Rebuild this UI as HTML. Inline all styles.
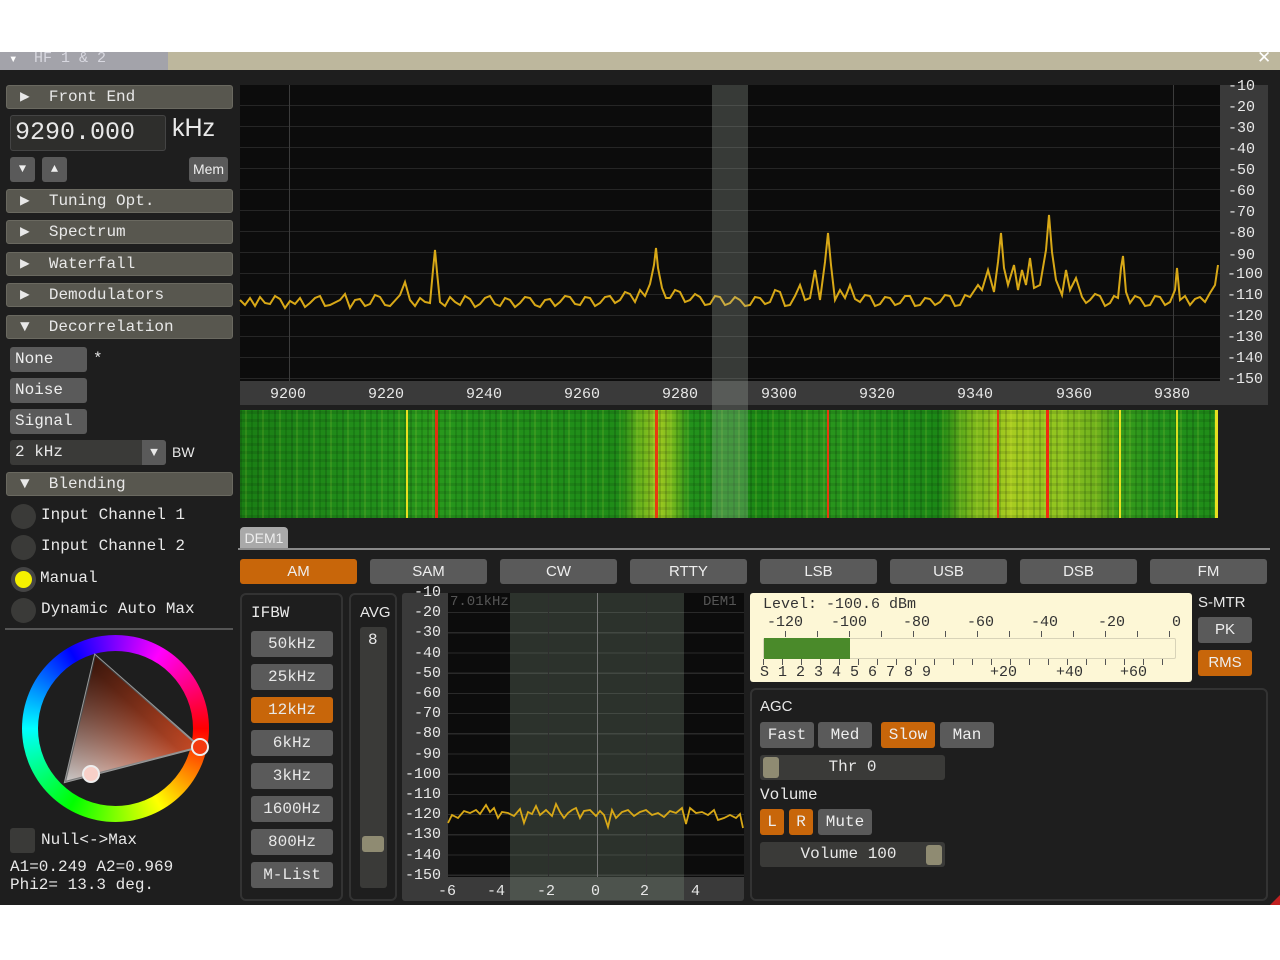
<!DOCTYPE html>
<html><head><meta charset="utf-8">
<style>
*{box-sizing:border-box;margin:0;padding:0}
body{width:1280px;height:960px;background:#fff;position:relative;overflow:hidden;font-family:"Liberation Mono",monospace;color:#e8e8e8;font-size:16px}
.a{position:absolute}
.main{left:0;top:70px;width:1280px;height:835px;background:#1e1e1e}
.hdr{position:absolute;left:6px;width:227px;height:24px;background:#58574f;border:1px solid #6a6960;border-radius:3px;line-height:22px;padding-left:13px;white-space:pre}
.btn{position:absolute;background:#5a5a5a;border-radius:3px;text-align:center;color:#eee;line-height:25px;height:25px}
.or{background:#c8660a !important}
.mode{position:absolute;top:559px;width:117px;height:25px;background:#5a5a5a;border-radius:3px;text-align:center;line-height:25px;font-family:"Liberation Sans",sans-serif;font-size:15px;color:#eee}
.rad{position:absolute;left:11px;width:25px;height:25px;border-radius:50%;background:#3a3a38}
.rl{position:absolute;left:41px;white-space:pre}
.panel{position:absolute;border:2px solid #333;border-radius:6px}
.ib{position:absolute;left:251px;width:82px;height:26px;background:#5a5a5a;border-radius:3px;text-align:center;line-height:26px}
</style></head><body>
<div class="a" style="left:0;top:52px;width:1280px;height:18px;background:#bdb79d"></div>
<div class="a" style="left:0;top:52px;width:168px;height:18px;background:#a3a3aa"></div>
<div class="a" style="left:9px;top:51px;font-size:14px;color:#fff">▾</div>
<div class="a" style="left:34px;top:50px;font-size:15px;color:#d8d8e0;white-space:pre">HF 1 &amp; 2</div>
<div class="a" style="left:1257px;top:48px;font-size:17px;color:#fff;font-family:'Liberation Sans',sans-serif">✕</div>
<div class="a main"></div>

<div class="hdr" style="top:85px">▶  Front End</div>
<div class="a" style="left:10px;top:115px;width:156px;height:36px;background:#2e2e2c;border:1px solid #444;border-radius:3px;font-size:25px;line-height:33px;padding-left:4px">9290.000</div>
<div class="a" style="left:172px;top:114px;font-size:25px;font-family:'Liberation Sans',sans-serif">kHz</div>
<div class="btn" style="left:10px;top:157px;width:25px;font-size:12px">▼</div>
<div class="btn" style="left:42px;top:157px;width:25px;font-size:12px">▲</div>
<div class="btn" style="left:189px;top:157px;width:39px;font-size:14px;font-family:'Liberation Sans',sans-serif">Mem</div>
<div class="hdr" style="top:189px">▶  Tuning Opt.</div>
<div class="hdr" style="top:220px">▶  Spectrum</div>
<div class="hdr" style="top:252px">▶  Waterfall</div>
<div class="hdr" style="top:283px">▶  Demodulators</div>
<div class="hdr" style="top:315px">▼  Decorrelation</div>
<div class="btn" style="left:10px;top:347px;width:77px;text-align:left;padding-left:5px">None</div>
<div class="a" style="left:93px;top:350px">*</div>
<div class="btn" style="left:10px;top:378px;width:77px;text-align:left;padding-left:5px">Noise</div>
<div class="btn" style="left:10px;top:409px;width:77px;text-align:left;padding-left:5px">Signal</div>
<div class="a" style="left:10px;top:440px;width:156px;height:25px;background:#3a3a38;border-radius:3px;line-height:25px;padding-left:5px;white-space:pre">2 kHz</div>
<div class="a" style="left:142px;top:440px;width:24px;height:25px;background:#5a5a5a;border-radius:0 3px 3px 0;text-align:center;line-height:25px;font-size:13px">▼</div>
<div class="a" style="left:172px;top:444px;font-size:14px;font-family:'Liberation Sans',sans-serif">BW</div>
<div class="hdr" style="top:472px">▼  Blending</div>
<div class="rad" style="top:504px"></div><div class="rl" style="top:506px">Input Channel 1</div>
<div class="rad" style="top:535px"></div><div class="rl" style="top:537px">Input Channel 2</div>
<div class="rad" style="top:567px;background:#444"><div style="position:absolute;left:4px;top:4px;width:17px;height:17px;border-radius:50%;background:#f5f000"></div></div><div class="rl" style="top:569px;left:40px">Manual</div>
<div class="rad" style="top:598px"></div><div class="rl" style="top:600px">Dynamic Auto Max</div>
<div class="a" style="left:5px;top:628px;width:228px;height:2px;background:#555"></div>
<div class="a" style="left:22px;top:635px;width:187px;height:187px;border-radius:50%;background:conic-gradient(from 90deg,#f00,#ff0 60deg,#0f0 120deg,#0ff 180deg,#00f 240deg,#f0f 300deg,#f00 360deg)"></div>
<div class="a" style="left:38px;top:651px;width:155px;height:155px;border-radius:50%;background:#1e1e1e"></div>
<svg class="a" style="left:0;top:620px" width="240" height="200">
<defs><linearGradient id="tg" x1="0" y1="1" x2="1" y2="0"><stop offset="0" stop-color="#fff"/><stop offset="0.55" stop-color="#c04a28"/><stop offset="1" stop-color="#ff4a10"/></linearGradient>
<linearGradient id="tk" x1="0" y1="0" x2="0.6" y2="1"><stop offset="0" stop-color="#000" stop-opacity="1"/><stop offset="1" stop-color="#000" stop-opacity="0"/></linearGradient></defs>
<polygon points="95,35 200,127 65,162" fill="url(#tg)" stroke="#999" stroke-width="2"/>
<polygon points="95,35 200,127 65,162" fill="url(#tk)" opacity="0.8"/>
<circle cx="200" cy="127" r="8" fill="#f43a10" stroke="#eee" stroke-width="2"/>
<circle cx="91" cy="154" r="8" fill="#f8d0c8" stroke="#eee" stroke-width="2"/>
</svg>
<div class="a" style="left:10px;top:828px;width:25px;height:25px;background:#3a3a38;border-radius:3px"></div>
<div class="a" style="left:41px;top:831px">Null&lt;-&gt;Max</div>
<div class="a" style="left:10px;top:858px;line-height:18px;white-space:pre">A1=0.249 A2=0.969
Phi2= 13.3 deg.</div>

<div class="a" style="left:240px;top:85px;width:980px;height:296px;background:#0c0c0c;background-image:repeating-linear-gradient(180deg,transparent 0 20px,#262626 20px 21px)"></div>
<div class="a" style="left:289px;top:85px;width:1px;height:296px;background:#3c3c3c"></div>
<div class="a" style="left:1173px;top:85px;width:1px;height:296px;background:#3c3c3c"></div>
<div class="a" style="left:240px;top:381px;width:1028px;height:24px;background:#3a3a3a"></div>
<div class="a" style="left:1220px;top:85px;width:48px;height:320px;background:#3a3a3a"></div>
<div class="a" style="left:1228px;top:76px;font-size:15px;line-height:21.07px;white-space:pre">-10
-20
-30
-40
-50
-60
-70
-80
-90</div>
<div class="a" style="left:1227px;top:264px;font-size:15px;line-height:21.07px;white-space:pre">-100
-110
-120
-130
-140
-150</div>
<div class="a" style="top:386px;left:0;font-size:15px">
<span class="a" style="left:270px">9200</span><span class="a" style="left:368px">9220</span><span class="a" style="left:466px">9240</span><span class="a" style="left:564px">9260</span><span class="a" style="left:662px">9280</span><span class="a" style="left:761px">9300</span><span class="a" style="left:859px">9320</span><span class="a" style="left:957px">9340</span><span class="a" style="left:1056px">9360</span><span class="a" style="left:1154px">9380</span></div>
<svg class="a" style="left:0;top:0" width="1280" height="400">
<polyline fill="none" stroke="#d8a817" stroke-width="2" points="240,300 245,305 250,298 255,306 260,297 265,303 270,304 275,296 280,299 285,308 290,301 295,304 300,298 305,307 310,303 315,298 320,296 325,306 330,305 340,300 345,294 350,308 355,300 360,299 365,306 370,304 375,295 380,297 385,305 390,306 400,295 405,282 410,300 415,306 420,298 425,302 430,303 433,270 435,250 437,272 440,302 445,306 450,297 455,302 460,305 465,296 470,299 475,307 480,304 485,298 490,296 495,304 500,306 505,298 510,300 515,307 520,303 525,297 530,298 535,305 540,307 545,300 550,299 555,306 560,302 565,296 570,297 575,304 580,305 585,297 590,298 595,306 600,303 605,297 610,296 615,303 620,300 625,292 630,294 635,302 640,290 645,296 650,284 654,265 656,248 658,268 662,288 666,298 670,298 675,290 680,292 685,302 690,300 695,294 700,297 705,305 710,304 715,296 720,297 725,305 730,303 735,297 740,300 745,306 750,305 755,297 760,298 765,304 770,302 775,290 780,292 785,306 790,305 795,296 800,285 805,300 810,298 815,270 820,300 825,262 828,233 831,265 835,300 840,290 845,298 850,285 855,299 860,302 865,295 870,296 875,306 880,304 885,297 890,298 895,305 900,303 905,296 910,296 915,306 920,305 925,298 930,299 935,305 940,302 945,295 950,296 955,306 960,305 965,295 970,297 978,285 982,290 988,270 994,292 998,262 1001,233 1004,268 1008,285 1014,265 1018,290 1022,270 1026,285 1030,258 1034,288 1040,285 1046,250 1049,215 1052,252 1056,280 1062,295 1066,270 1070,290 1076,278 1082,297 1086,303 1090,300 1095,294 1100,296 1105,306 1110,303 1114,296 1118,298 1121,268 1123,256 1126,292 1130,303 1135,296 1140,298 1145,306 1150,305 1155,296 1160,297 1165,305 1170,302 1175,290 1177,268 1180,300 1185,296 1190,305 1195,299 1200,297 1205,302 1210,293 1215,285 1218,265"/>
</svg>
<div class="a" style="left:240px;top:410px;width:978px;height:108px;
background:
linear-gradient(90deg,transparent 166px,#e8e020 166px 168px,transparent 168px 195px,#e03010 195px 198px,transparent 198px 415px,#e83a10 415px 418px,transparent 418px 587px,#e83a10 587px 589px,transparent 589px 757px,#e83a10 757px 759px,transparent 759px 806px,#f02a10 806px 809px,transparent 809px 879px,#e8e020 879px 881px,transparent 881px 936px,#d8e020 936px 938px,transparent 938px 975px,#e8e020 975px 978px),
repeating-linear-gradient(90deg,rgba(0,0,0,.14) 0 2px,transparent 2px 5px,rgba(255,255,80,.1) 5px 7px,transparent 7px 11px,rgba(0,60,0,.18) 11px 13px,transparent 13px 17px),
repeating-linear-gradient(0deg,rgba(0,0,0,.1) 0 3px,transparent 3px 8px),
linear-gradient(90deg,#1a7e14 0,#23921c 150px,#2a9a1c 190px,#23921c 230px,#1f8c18 380px,#6ab41c 400px,#9cc820 420px,#6ab41c 435px,#23921c 450px,#1c8a16 520px,#2a961c 580px,#23921c 620px,#1c8816 700px,#78b81c 730px,#a8cc20 770px,#90c420 820px,#6cb01c 860px,#3a9e1c 880px,#23921c 920px,#1f8c18 978px);"></div>
<div class="a" style="left:712px;top:85px;width:36px;height:433px;background:rgba(170,180,170,.28)"></div>

<div class="a" style="left:240px;top:527px;width:48px;height:22px;background:#a9a9a9;border-radius:4px 4px 0 0;color:#eee;font-family:'Liberation Sans',sans-serif;font-size:14px;line-height:22px;text-align:center">DEM1</div>
<div class="a" style="left:238px;top:548px;width:1032px;height:2px;background:#8a8a8a"></div>
<div class="mode or" style="left:240px">AM</div>
<div class="mode" style="left:370px">SAM</div>
<div class="mode" style="left:500px">CW</div>
<div class="mode" style="left:630px">RTTY</div>
<div class="mode" style="left:760px">LSB</div>
<div class="mode" style="left:890px">USB</div>
<div class="mode" style="left:1020px">DSB</div>
<div class="mode" style="left:1150px">FM</div>

<div class="panel" style="left:240px;top:593px;width:103px;height:308px"></div>
<div class="a" style="left:251px;top:604px">IFBW</div>
<div class="ib" style="top:631px">50kHz</div>
<div class="ib" style="top:664px">25kHz</div>
<div class="ib or" style="top:697px">12kHz</div>
<div class="ib" style="top:730px">6kHz</div>
<div class="ib" style="top:763px">3kHz</div>
<div class="ib" style="top:796px">1600Hz</div>
<div class="ib" style="top:829px">800Hz</div>
<div class="ib" style="top:862px">M-List</div>
<div class="panel" style="left:349px;top:593px;width:48px;height:308px"></div>
<div class="a" style="left:360px;top:604px;font-family:'Liberation Sans',sans-serif;font-size:15px">AVG</div>
<div class="a" style="left:360px;top:627px;width:27px;height:261px;background:#3a3a38;border-radius:3px"></div>
<div class="a" style="left:368px;top:631px">8</div>
<div class="a" style="left:362px;top:836px;width:22px;height:16px;background:#8f8b72;border-radius:3px"></div>

<div class="a" style="left:402px;top:593px;width:342px;height:308px;background:#3a3a3a;border-radius:3px"></div>
<div class="a" style="left:448px;top:593px;width:296px;height:284px;background:#0c0c0c;background-image:repeating-linear-gradient(180deg,transparent 0 19px,#2a2a2a 19px 20.2px)"></div>
<div class="a" style="left:510px;top:593px;width:174px;height:307px;background:rgba(130,150,130,.28)"></div>
<div class="a" style="left:597px;top:593px;width:1px;height:284px;background:#777"></div>
<div class="a" style="left:548px;top:593px;width:1px;height:284px;background:#2e2e2e"></div>
<div class="a" style="left:646px;top:593px;width:1px;height:284px;background:#2e2e2e"></div>
<div class="a" style="left:450px;top:594px;font-size:14px;color:#555">7.01kHz</div>
<div class="a" style="left:703px;top:594px;font-size:14px;color:#555">DEM1</div>
<div class="a" style="left:405px;top:583px;font-size:15px;line-height:20.2px;white-space:pre;text-align:right;width:36px">-10
-20
-30
-40
-50
-60
-70
-80
-90
-100
-110
-120
-130
-140
-150</div>
<div class="a" style="top:883px;left:0;font-size:15px"><span class="a" style="left:438px">-6</span><span class="a" style="left:487px">-4</span><span class="a" style="left:537px">-2</span><span class="a" style="left:591px">0</span><span class="a" style="left:640px">2</span><span class="a" style="left:691px">4</span></div>
<svg class="a" style="left:0;top:0" width="760" height="900">
<polyline fill="none" stroke="#d8a817" stroke-width="1.8" points="448,823 452,815 458,818 464,811 470,813 476,810 480,814 486,805 490,812 494,808 498,818 502,812 508,813 514,816 520,809 524,823 528,812 532,814 536,806 540,815 546,810 552,816 556,804 560,812 564,818 568,813 572,810 576,808 580,818 584,811 590,810 596,816 600,811 604,815 608,827 612,810 616,818 622,812 628,810 634,816 640,812 646,810 652,815 658,813 664,817 670,811 676,813 682,808 686,824 690,808 696,813 702,812 708,815 714,810 718,820 724,818 730,815 736,818 740,814 743,828"/>
</svg>

<div class="a" style="left:750px;top:593px;width:442px;height:89px;background:#fdf7d6;border-radius:3px"></div>
<div class="a" style="left:763px;top:596px;font-size:15px;color:#333;white-space:pre">Level: -100.6 dBm</div>
<div class="a" style="top:614px;left:0;font-size:15px;color:#333"><span class="a" style="left:767px">-120</span><span class="a" style="left:831px">-100</span><span class="a" style="left:903px">-80</span><span class="a" style="left:967px">-60</span><span class="a" style="left:1031px">-40</span><span class="a" style="left:1098px">-20</span><span class="a" style="left:1172px">0</span></div>
<div class="a" style="left:763px;top:638px;width:413px;height:21px;border:1px solid #d8d3b8;border-radius:2px"></div>
<div class="a" style="left:764px;top:638px;width:86px;height:21px;background:#4a8a2a"></div>
<div class="a" style="left:763px;top:631px;width:413px;height:6px;background:repeating-linear-gradient(90deg,#555 0 1px,transparent 1px 32px);background-position:22px 0"></div>
<div class="a" style="left:763px;top:659px;width:413px;height:6px;background:repeating-linear-gradient(90deg,#555 0 1px,transparent 1px 19px)"></div>
<div class="a" style="top:664px;left:0;font-size:15px;color:#333;white-space:pre"><span class="a" style="left:760px">S 1 2 3 4 5 6 7 8 9</span><span class="a" style="left:990px">+20</span><span class="a" style="left:1056px">+40</span><span class="a" style="left:1120px">+60</span></div>
<div class="a" style="left:1198px;top:594px;font-family:'Liberation Sans',sans-serif;font-size:15px">S-MTR</div>
<div class="btn" style="left:1198px;top:617px;width:54px;height:26px;line-height:26px;font-family:'Liberation Sans',sans-serif;font-size:15px">PK</div>
<div class="btn or" style="left:1198px;top:650px;width:54px;height:26px;line-height:26px;font-family:'Liberation Sans',sans-serif;font-size:15px">RMS</div>

<div class="panel" style="left:750px;top:688px;width:518px;height:213px"></div>
<div class="a" style="left:760px;top:698px;font-family:'Liberation Sans',sans-serif;font-size:15px">AGC</div>
<div class="btn" style="left:760px;top:722px;width:54px;height:26px;line-height:26px">Fast</div>
<div class="btn" style="left:818px;top:722px;width:54px;height:26px;line-height:26px">Med</div>
<div class="btn or" style="left:881px;top:722px;width:54px;height:26px;line-height:26px">Slow</div>
<div class="btn" style="left:940px;top:722px;width:54px;height:26px;line-height:26px">Man</div>
<div class="a" style="left:760px;top:755px;width:185px;height:25px;background:#3a3a38;border-radius:3px;text-align:center;line-height:25px">Thr 0</div>
<div class="a" style="left:763px;top:757px;width:16px;height:21px;background:#8f8b72;border-radius:3px"></div>
<div class="a" style="left:760px;top:786px">Volume</div>
<div class="btn or" style="left:760px;top:809px;width:24px;height:26px;line-height:26px">L</div>
<div class="btn or" style="left:789px;top:809px;width:24px;height:26px;line-height:26px">R</div>
<div class="btn" style="left:818px;top:809px;width:54px;height:26px;line-height:26px">Mute</div>
<div class="a" style="left:760px;top:842px;width:185px;height:25px;background:#3a3a38;border-radius:3px;text-align:center;line-height:25px;padding-right:8px">Volume 100</div>
<div class="a" style="left:926px;top:845px;width:16px;height:20px;background:#8f8b72;border-radius:3px"></div>
<div class="a" style="left:1270px;top:895px;width:0;height:0;border-left:10px solid transparent;border-bottom:10px solid #c02020"></div>
</body></html>
